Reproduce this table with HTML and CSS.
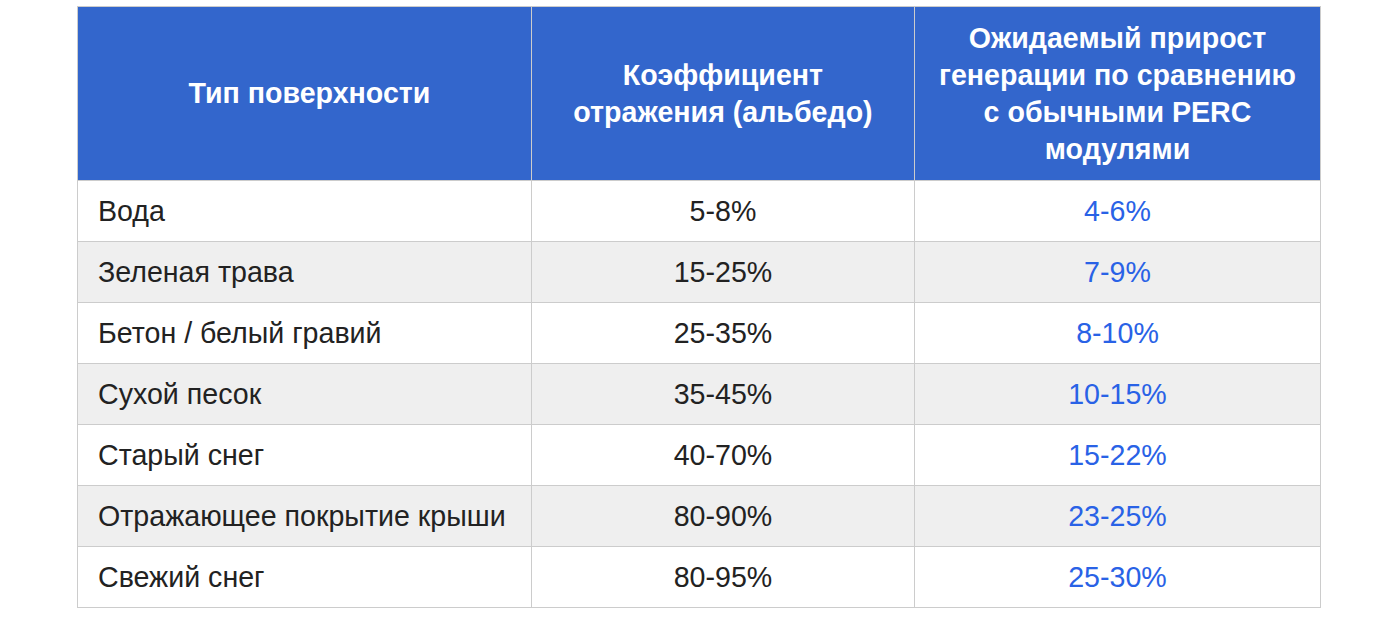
FILE: index.html
```html
<!DOCTYPE html>
<html lang="ru">
<head>
<meta charset="utf-8">
<title>Альбедо</title>
<link rel="stylesheet" href="styles.css">
</head>
<body>
<table class="albedo">
  <colgroup>
    <col class="c1">
    <col class="c2">
    <col class="c3">
  </colgroup>
  <thead>
    <tr>
      <th class="first">Тип поверхности</th>
      <th>Коэффициент<br>отражения (альбедо)</th>
      <th>Ожидаемый прирост<br>генерации по сравнению<br>с обычными PERC<br>модулями</th>
    </tr>
  </thead>
  <tbody>
    <tr><td>Вода</td><td class="mid">5-8%</td><td class="gain">4-6%</td></tr>
    <tr><td>Зеленая трава</td><td class="mid">15-25%</td><td class="gain">7-9%</td></tr>
    <tr><td>Бетон / белый гравий</td><td class="mid">25-35%</td><td class="gain">8-10%</td></tr>
    <tr><td>Сухой песок</td><td class="mid">35-45%</td><td class="gain">10-15%</td></tr>
    <tr><td>Старый снег</td><td class="mid">40-70%</td><td class="gain">15-22%</td></tr>
    <tr><td>Отражающее покрытие крыши</td><td class="mid">80-90%</td><td class="gain">23-25%</td></tr>
    <tr><td>Свежий снег</td><td class="mid">80-95%</td><td class="gain">25-30%</td></tr>
  </tbody>
</table>
</body>
</html>
```

FILE: styles.css
```css
html, body {
  margin: 0;
  padding: 0;
  background: #ffffff;
}
body {
  font-family: "Liberation Sans", Arial, sans-serif;
  color: #222222;
}
.albedo {
  border-collapse: collapse;
  table-layout: fixed;
  width: 1243px;
  margin: 6px 0 0 77px;
}
.c1 { width: 454px; }
.c2 { width: 383px; }
.c3 { width: 406px; }
.albedo th,
.albedo td {
  border: 1px solid #cccccc;
}
.albedo th {
  background: #3366cc;
  color: #ffffff;
  font-weight: bold;
  font-size: 28.6px;
  line-height: 37px;
  height: 173px;
  padding: 0 10px;
  text-align: center;
  vertical-align: middle;
}
.albedo th.first {
  padding: 0 10px 0 20px;
}
.albedo td {
  font-size: 28.6px;
  line-height: 32px;
  height: 61px;
  padding: 0 20px;
  vertical-align: middle;
  box-sizing: border-box;
}
.albedo tbody tr:nth-child(even) td {
  background: #efefef;
}
.albedo td.mid {
  text-align: center;
}
.albedo td.gain {
  text-align: center;
  color: #2962e6;
}
```
